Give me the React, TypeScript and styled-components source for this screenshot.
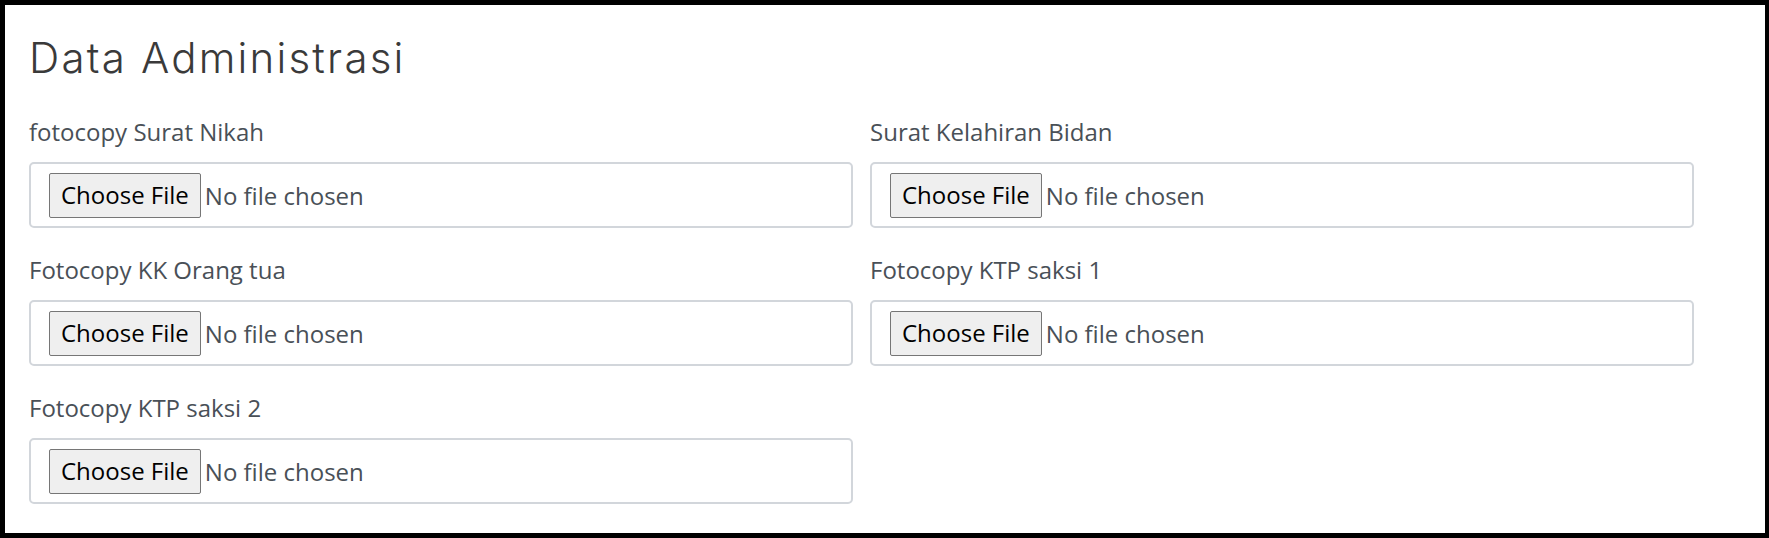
import React from "react";
import styled, { createGlobalStyle } from "styled-components";

const Global = createGlobalStyle`
  html, body { margin: 0; padding: 0; background: #ffffff; }
  * { box-sizing: border-box; }
`;

const Frame = styled.div`
  width: 1769px;
  height: 538px;
  border-style: solid;
  border-color: #000000;
  border-width: 5px 4px 5px 5px;
  background: #ffffff;
  padding: 28px 24px 0 24px;
`;

const Title = styled.h3`
  margin: 0 0 31px 0;
  font-family: Inter, "Open Sans", sans-serif;
  font-weight: 300;
  font-size: 42px;
  line-height: 50px;
  letter-spacing: 2.2px;
  color: #3a3a3a;
`;

const FormGrid = styled.div`
  display: grid;
  grid-template-columns: 824px 824px;
  column-gap: 17px;
`;

const Group = styled.div`
  display: flex;
  flex-direction: column;
  margin-bottom: 24px;
`;

const Label = styled.label`
  font-family: "Open Sans", sans-serif;
  font-size: 24px;
  line-height: 36px;
  color: #495057;
  margin-bottom: 12px;
`;

const FileField = styled.div`
  display: flex;
  align-items: center;
  height: 66px;
  border: 2px solid #d2d6db;
  border-radius: 5px;
  padding: 0 18px;
  background: #ffffff;
`;

const FileButton = styled.button`
  height: 45px;
  padding: 0 11px;
  margin: 0 4px 0 0;
  border: 1px solid #767676;
  border-radius: 2px;
  background: #efefef;
  color: #000000;
  font-family: "Open Sans", sans-serif;
  font-size: 24px;
  line-height: 1;
  cursor: pointer;
`;

const FileName = styled.span`
  font-family: "Open Sans", sans-serif;
  font-size: 24px;
  color: #495057;
`;

const fields = [
  "fotocopy Surat Nikah",
  "Surat Kelahiran Bidan",
  "Fotocopy KK Orang tua",
  "Fotocopy KTP saksi 1",
  "Fotocopy KTP saksi 2",
];

export default function App() {
  return (
    <>
      <Global />
      <Frame>
        <Title>Data Administrasi</Title>
        <FormGrid>
          {fields.map((f) => (
            <Group key={f}>
              <Label>{f}</Label>
              <FileField>
                <FileButton type="button">Choose File</FileButton>
                <FileName>No file chosen</FileName>
              </FileField>
            </Group>
          ))}
        </FormGrid>
      </Frame>
    </>
  );
}
